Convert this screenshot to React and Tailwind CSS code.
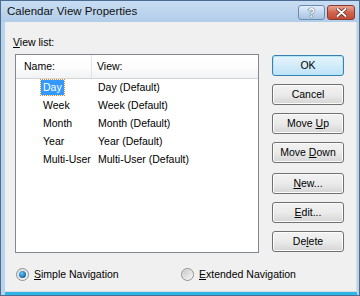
import React from "react";

const font = { fontFamily: '"Liberation Sans", Arial, sans-serif' };

const rows = [
  ["Day", "Day (Default)"],
  ["Week", "Week (Default)"],
  ["Month", "Month (Default)"],
  ["Year", "Year (Default)"],
  ["Multi-User", "Multi-User (Default)"],
];

const Btn = ({ children, primary, className = "" }) => (
  <div
    className={
      "h-[21px] w-[72px] rounded-[3px] border flex items-center justify-center text-[10.5px] text-black " +
      (primary
        ? "border-[#3c7fb1] bg-gradient-to-b from-[#e5f4fc] via-[#d3ecfa] to-[#bde3f7] shadow-[inset_0_0_0_1px_#b4e6fa] "
        : "border-[#707070] bg-gradient-to-b from-[#f2f2f2] via-[#ebebeb] to-[#d5d5d5] shadow-[inset_0_0_0_1px_#fcfcfc] ") +
      className
    }
  >
    {children}
  </div>
);

const Radio = ({ checked }) => (
  <div className="w-[13px] h-[13px] rounded-full border border-[#8e8f8f] bg-gradient-to-br from-[#dcdcdc] to-[#f8f8f8] flex items-center justify-center">
    {checked ? (
      <div className="w-[7px] h-[7px] rounded-full bg-[radial-gradient(circle_at_40%_35%,#6dc7f5,#1c74b5_60%,#0d4d86)]" />
    ) : (
      <div className="w-[9px] h-[9px] rounded-full bg-gradient-to-br from-[#cbcbcb] to-[#f4f4f4]" />
    )}
  </div>
);

export default function App() {
  return (
    <div
      className="w-[360px] h-[296px] flex flex-col bg-[#bad3ec] border border-[#4b6d92] overflow-hidden"
      style={font}
    >
      {/* title bar */}
      <div className="h-[21px] flex items-center bg-gradient-to-b from-[#c8ddf2] to-[#b2cdea] pl-[6px] pr-[4px]">
        <span className="text-[11.5px] text-[#111] flex-1 pt-[1px]">Calendar View Properties</span>
        <div className="w-[27px] h-[15px] mt-[2px] rounded-[3px] border border-[#6a8bb0] bg-gradient-to-b from-[#e3eef9] via-[#c4d8ee] to-[#a9c4e2] flex items-center justify-center text-[12px] font-bold text-white [text-shadow:0_0_1px_#2c4a6e,0_0_1px_#2c4a6e]">
          ?
        </div>
        <div className="w-[28px] h-[15px] mt-[2px] ml-[2px] rounded-[3px] border border-[#8a3b2f] bg-gradient-to-b from-[#e8a493] via-[#d0664f] to-[#c24a34] flex items-center justify-center">
          <svg width="11" height="9" viewBox="0 0 11 9">
            <path d="M1.5 1 L9.5 8 M9.5 1 L1.5 8" stroke="#5b1e15" strokeWidth="3.4" strokeLinecap="round" />
            <path d="M1.5 1 L9.5 8 M9.5 1 L1.5 8" stroke="#fff" strokeWidth="2" strokeLinecap="round" />
          </svg>
        </div>
      </div>

      {/* client area */}
      <div className="flex-1 ml-[4px] mr-[2px] mb-[3px] bg-[#f0f0f0] border-r border-b border-[#dcdcdc] shadow-[0_3px_0_#2fb5ea] flex flex-col pl-[8px] pt-[14px]">
        <div className="text-[10.5px] leading-[13px] text-black">
          <span className="underline">V</span>iew list:
        </div>
        <div className="flex mt-[5px]">
          {/* list view */}
          <div className="ml-[2px] w-[244px] h-[199px] bg-white border border-[#828790]">
            <div className="h-[24px] flex text-[10.5px] text-black bg-gradient-to-b from-white via-[#fdfdfd] to-[#f1f2f4] border-b border-[#d5d5d5]">
              <div className="w-[76px] pl-[8px] flex items-center border-r border-[#e2e3e5]">Name:</div>
              <div className="flex-1 pl-[5px] flex items-center">View:</div>
            </div>
            <div>
              {rows.map(([n, v], i) => (
                <div key={n} className="h-[18px] flex items-center text-[10.5px] text-black">
                  <div className="w-[82px] pl-[25px] whitespace-nowrap">
                    {i === 0 ? (
                      <span className="inline-block px-[2px] leading-[15px] bg-[#3399ff] text-white outline-1 outline-dotted outline-[#e08a3a]">
                        {n}
                      </span>
                    ) : (
                      <span className="pl-[2px]">{n}</span>
                    )}
                  </div>
                  <div className="whitespace-nowrap">{v}</div>
                </div>
              ))}
            </div>
          </div>

          {/* buttons */}
          <div className="ml-[13px] flex flex-col pt-[1px]">
            <Btn primary>OK</Btn>
            <Btn className="mt-[8px]">Cancel</Btn>
            <Btn className="mt-[8px]">
              <span>
                Move <span className="underline">U</span>p
              </span>
            </Btn>
            <Btn className="mt-[8px]">
              <span>
                Move <span className="underline">D</span>own
              </span>
            </Btn>
            <Btn className="mt-[10px]">
              <span>
                <span className="underline">N</span>ew...
              </span>
            </Btn>
            <Btn className="mt-[8px]">
              <span>
                <span className="underline">E</span>dit...
              </span>
            </Btn>
            <Btn className="mt-[8px]">
              <span>
                De<span className="underline">l</span>ete
              </span>
            </Btn>
          </div>
        </div>

        {/* radios */}
        <div className="flex items-center mt-[14px] text-[10.5px] text-black">
          <div className="flex items-center ml-[3px] w-[165px]">
            <Radio checked />
            <span className="ml-[5px]">
              <span className="underline">S</span>imple Navigation
            </span>
          </div>
          <div className="flex items-center">
            <Radio />
            <span className="ml-[5px]">
              <span className="underline">E</span>xtended Navigation
            </span>
          </div>
        </div>
      </div>
    </div>
  );
}
